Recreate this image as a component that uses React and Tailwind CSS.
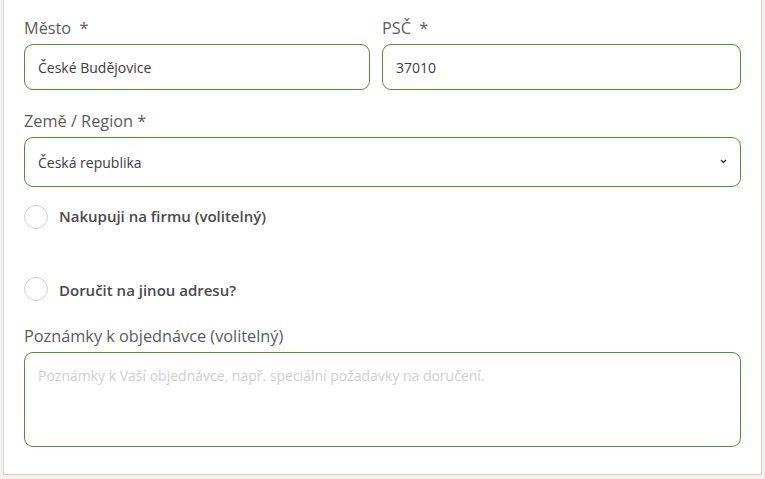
import React from "react";

const font = { fontFamily: '"Open Sans", "Noto Sans", sans-serif' };

function Label({ children, className = "" }) {
  return (
    <div className={"text-[16.3px] leading-[24px] text-[#5b5b5b] mb-1 " + className}>
      {children}
    </div>
  );
}

function Check({ children, className = "", textClass = "" }) {
  return (
    <div className={"flex items-center gap-[11px] " + className}>
      <div className="w-[24px] h-[24px] rounded-full border border-[#d0d0d0] bg-white shrink-0" />
      <span className={"text-[15px] font-semibold text-[#4a4a4a] leading-[20px] " + textClass}>{children}</span>
    </div>
  );
}

export default function App() {
  return (
    <div className="w-[765px] h-[479px] bg-[#f3f0f0] overflow-hidden" style={font}>
      <div className="ml-[3px] w-[759px] bg-white border border-t-0 border-[#d5d2d2] px-5 pt-4 pb-[27px]">
        <div className="flex gap-3">
          <div className="w-[346px]">
            <Label>
              Město <span className="ml-1">*</span>
            </Label>
            <div className="h-[46px] rounded-[9px] border border-[#4e9332] flex items-center px-[13px] text-[14px] text-[#3d3d3d]">
              České Budějovice
            </div>
          </div>
          <div className="flex-1">
            <Label>
              PSČ <span className="ml-1">*</span>
            </Label>
            <div className="h-[46px] rounded-[9px] border border-[#4e9332] flex items-center px-[13px] text-[14px] text-[#3d3d3d]">
              37010
            </div>
          </div>
        </div>

        <Label className="mt-[19px]">Země / Region *</Label>
        <div className="h-[50px] rounded-[9px] border border-[#4e9332] flex items-center justify-between pl-[13px] pr-[13px] text-[14px] text-[#3d3d3d]">
          <span>Česká republika</span>
          <svg width="7" height="5" viewBox="0 0 7 5" className="mt-[-1px]">
            <path d="M1 1 L3.5 3.5 L6 1" stroke="#333" strokeWidth="1.4" fill="none" />
          </svg>
        </div>

        <Check className="mt-[18px]" textClass="-mt-[3px]">Nakupuji na firmu (volitelný)</Check>
        <Check className="mt-[48px]" textClass="mt-[1px]">Doručit na jinou adresu?</Check>

        <Label className="mt-[23px]">Poznámky k objednávce (volitelný)</Label>
        <div className="h-[95px] rounded-[9px] border border-[#4e9332] px-[13px] pt-[13px] text-[14px] text-[#cfcfcf] leading-[20px]">
          Poznámky k Vaší objednávce, např. speciální požadavky na doručení.
        </div>
      </div>
    </div>
  );
}
